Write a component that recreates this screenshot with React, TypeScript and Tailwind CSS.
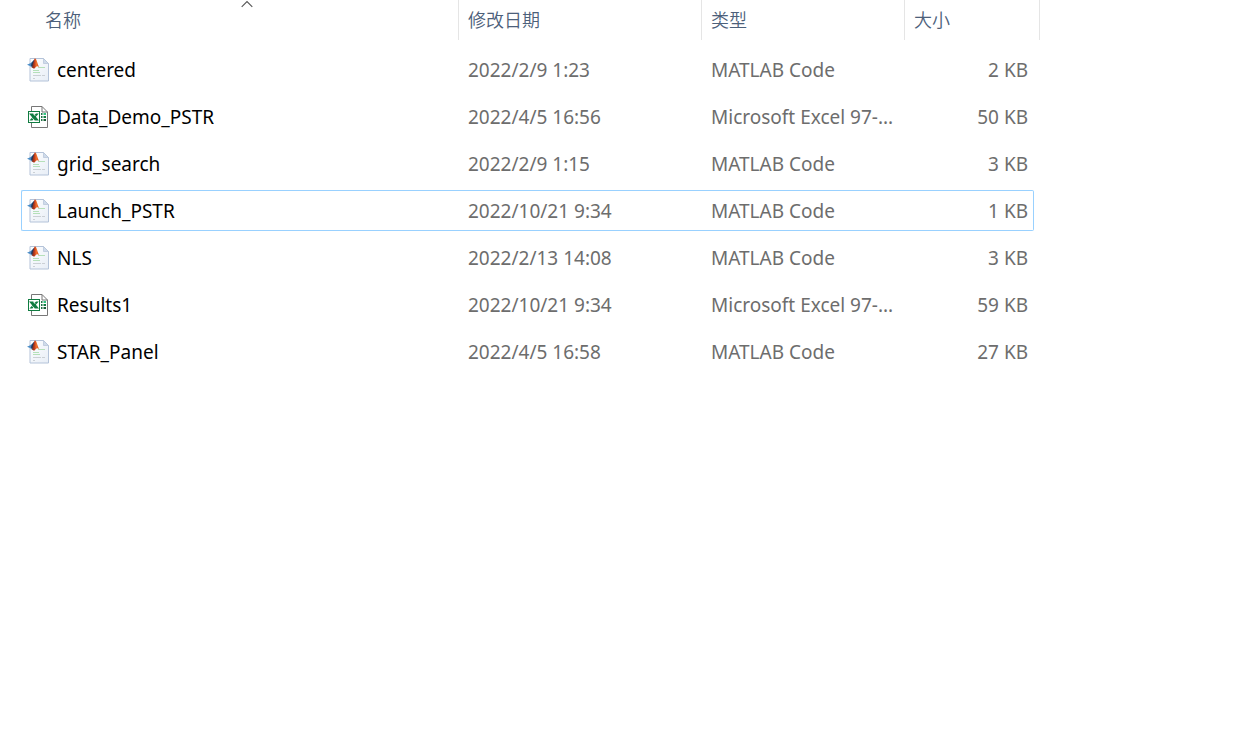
type FileKind = "matlab" | "excel";

interface FileEntry {
  name: string;
  modified: string;
  kind: FileKind;
  size: string;
  focused?: boolean;
}

const files: FileEntry[] = [
  { name: "centered", modified: "2022/2/9 1:23", kind: "matlab", size: "2 KB" },
  { name: "Data_Demo_PSTR", modified: "2022/4/5 16:56", kind: "excel", size: "50 KB" },
  { name: "grid_search", modified: "2022/2/9 1:15", kind: "matlab", size: "3 KB" },
  { name: "Launch_PSTR", modified: "2022/10/21 9:34", kind: "matlab", size: "1 KB", focused: true },
  { name: "NLS", modified: "2022/2/13 14:08", kind: "matlab", size: "3 KB" },
  { name: "Results1", modified: "2022/10/21 9:34", kind: "excel", size: "59 KB" },
  { name: "STAR_Panel", modified: "2022/4/5 16:58", kind: "matlab", size: "27 KB" },
];

const typeNames: Record<FileKind, string> = {
  matlab: "MATLAB Code",
  excel: "Microsoft Excel 97-...",
};

function MatlabIcon() {
  return (
    <svg className="h-6 w-[22px] shrink-0" viewBox="0 0 22 24" aria-hidden="true">
      <defs>
        <linearGradient id="page" x1="0" y1="0" x2="1" y2="1">
          <stop offset="0" stopColor="#fdfeff" />
          <stop offset="1" stopColor="#e8eef6" />
        </linearGradient>
        <linearGradient id="peak" x1="0" y1="0" x2="1" y2="0">
          <stop offset="0" stopColor="#5a2a24" />
          <stop offset="0.35" stopColor="#b8381c" />
          <stop offset="0.6" stopColor="#f0702a" />
          <stop offset="1" stopColor="#d8481c" />
        </linearGradient>
      </defs>
      <path d="M3 .5H16.5L21.5 5.5v17.5H3z" fill="url(#page)" stroke="#b4c3d9" />
      <path d="M16.5 .5V5.5h5z" fill="#cfdbea" stroke="#b4c3d9" strokeWidth=".7" />
      <path d="M11 9.5h7M6 12.5h6M6 14.5h7" stroke="#b5e0b9" />
      <path d="M6 17.5h8M15 17.5h3M6 20.5h2" stroke="#cbd0d5" />
      <path d="M0 6.7 3.8 5 7 2 7.5 6.2 4.5 9.2 3 7.9z" fill="#4a8cc6" />
      <path d="M4.6 5 7 2 7.8 5 5.4 8.7 4 7.4z" fill="#25375a" />
      <path d="M4.5 9.2C6.3 7.7 6.4 1.6 8 .2 9.8 .8 10.6 7 12.6 9.6 11 8.2 9.8 7.8 8.7 9.2L7.1 10.8z" fill="url(#peak)" />
    </svg>
  );
}

function ExcelIcon() {
  return (
    <svg className="h-6 w-[22px] shrink-0" viewBox="0 0 22 24" aria-hidden="true">
      <path d="M4.5 1.5H15l5.5 5.5v15.5h-16z" fill="#fff" stroke="#777" />
      <path d="M15 1.5V7h5.5" fill="none" stroke="#777" />
      <path d="M14 8h1.5v2h-1.5zM14 11h1.5v2h-1.5zM14 14h1.5v2h-1.5z" fill="#217346" />
      <path d="M16.5 8H19v2h-2.5z" fill="#33c481" />
      <path d="M16.5 11H19v2h-2.5z" fill="#107c41" />
      <path d="M16.5 14H19v2h-2.5z" fill="#185c37" />
      <rect x="1" y="6" width="12" height="12" fill="#107c41" />
      <rect x="2" y="7" width="10" height="10" fill="#fff" />
      <path d="M2 8.5h4.2L12 15.5H7.8z" fill="#107c41" />
      <path d="M9 8.5h2.8L5.4 15.5H2.4z" fill="#107c41" />
      <path d="M6.6 9.2 8.4 11M5 12.8 6.8 14.8" stroke="#fff" strokeWidth=".7" />
    </svg>
  );
}

const headButton = "block h-10 w-full pl-[9px] text-left text-[18px] leading-6 text-[#4c607a]";

function Row({ file }: { file: FileEntry }) {
  const edge = file.focused ? "border-[#99d1ff]" : "border-transparent";
  const middle = `flex h-[41px] items-center whitespace-nowrap border-y pl-[9px] ${edge}`;
  return (
    <tr className="text-[#6d6d6d]">
      <td className="py-[3px] pl-[21px]">
        <div className={`flex h-[41px] items-center gap-2 rounded-l-xs border-y border-l pl-[5px] text-black ${edge}`}>
          {file.kind === "matlab" ? <MatlabIcon /> : <ExcelIcon />}
          <span className="truncate">{file.name}</span>
        </div>
      </td>
      <td className="py-[3px]">
        <div className={middle}>{file.modified}</div>
      </td>
      <td className="py-[3px]">
        <div className={middle}>{typeNames[file.kind]}</div>
      </td>
      <td className="py-[3px] pr-[6px]">
        <div className={`flex h-[41px] items-center justify-end rounded-r-xs border-y border-r pr-[5px] ${edge}`}>
          {file.size}
        </div>
      </td>
    </tr>
  );
}

export default function App() {
  return (
    <main className="min-h-screen overflow-x-auto bg-white font-['Noto_Sans','Noto_Sans_CJK_SC',sans-serif] text-[19px] leading-7">
      <table className="w-[1040px] table-fixed border-separate border-spacing-0">
        <colgroup>
          <col className="w-[459px]" />
          <col className="w-[243px]" />
          <col className="w-[203px]" />
          <col className="w-[135px]" />
        </colgroup>
        <thead>
          <tr>
            <th className="p-0 pb-[6px] pl-[36px] font-[350]" aria-sort="ascending">
              <div className="relative border-r border-[#e5e5e5]">
                <button type="button" className={headButton}>名称</button>
                <svg className="absolute left-1/2 top-0 h-2 w-3 -translate-x-1/2" viewBox="0 0 12 8" aria-hidden="true">
                  <path d="M.7 6.8 6 1.5l5.3 5.3" fill="none" stroke="#555" strokeWidth="1.1" />
                </svg>
              </div>
            </th>
            <th className="p-0 pb-[6px] font-[350]">
              <div className="border-r border-[#e5e5e5]">
                <button type="button" className={headButton}>修改日期</button>
              </div>
            </th>
            <th className="p-0 pb-[6px] font-[350]">
              <div className="border-r border-[#e5e5e5]">
                <button type="button" className={headButton}>类型</button>
              </div>
            </th>
            <th className="p-0 pb-[6px] font-[350]">
              <div className="border-r border-[#e5e5e5]">
                <button type="button" className={headButton}>大小</button>
              </div>
            </th>
          </tr>
        </thead>
        <tbody>
          {files.map((file) => (
            <Row key={file.name} file={file} />
          ))}
        </tbody>
      </table>
    </main>
  );
}
